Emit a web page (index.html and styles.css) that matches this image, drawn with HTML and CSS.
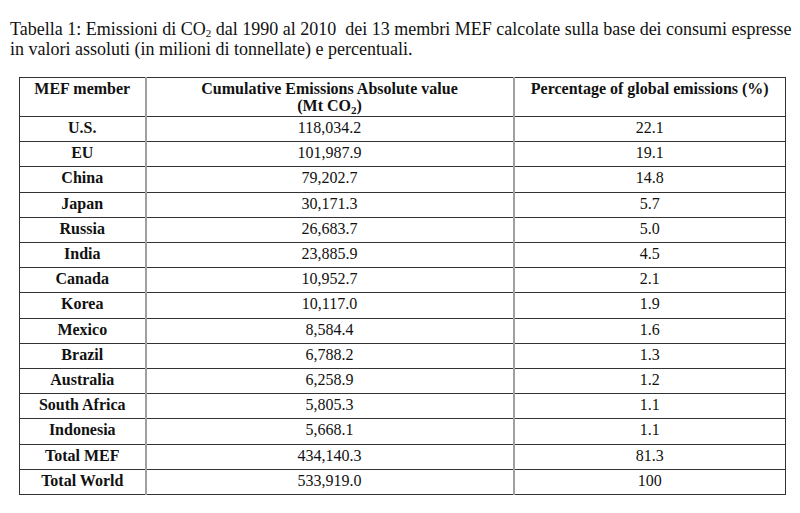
FILE: index.html
```html
<!DOCTYPE html>
<html lang="it">
<head>
<meta charset="utf-8">
<title>Tabella 1</title>
<link rel="stylesheet" href="styles.css">
</head>
<body>
<div class="page">
  <p class="caption">Tabella 1: Emissioni di CO<sub>2</sub> dal 1990 al 2010&nbsp; dei 13 membri MEF calcolate sulla base dei consumi espresse<br>in valori assoluti (in milioni di tonnellate) e percentuali.</p>
  <table class="data">
    <colgroup>
      <col class="c1">
      <col class="c2">
      <col class="c3">
    </colgroup>
    <thead>
      <tr>
        <th>MEF member</th>
        <th>Cumulative Emissions Absolute value<br>(Mt CO<sub>2</sub>)</th>
        <th>Percentage of global emissions (%)</th>
      </tr>
    </thead>
    <tbody>
      <tr><th>U.S.</th><td>118,034.2</td><td>22.1</td></tr>
      <tr><th>EU</th><td>101,987.9</td><td>19.1</td></tr>
      <tr><th>China</th><td>79,202.7</td><td>14.8</td></tr>
      <tr><th>Japan</th><td>30,171.3</td><td>5.7</td></tr>
      <tr><th>Russia</th><td>26,683.7</td><td>5.0</td></tr>
      <tr><th>India</th><td>23,885.9</td><td>4.5</td></tr>
      <tr><th>Canada</th><td>10,952.7</td><td>2.1</td></tr>
      <tr><th>Korea</th><td>10,117.0</td><td>1.9</td></tr>
      <tr><th>Mexico</th><td>8,584.4</td><td>1.6</td></tr>
      <tr><th>Brazil</th><td>6,788.2</td><td>1.3</td></tr>
      <tr><th>Australia</th><td>6,258.9</td><td>1.2</td></tr>
      <tr><th>South Africa</th><td>5,805.3</td><td>1.1</td></tr>
      <tr><th>Indonesia</th><td>5,668.1</td><td>1.1</td></tr>
      <tr><th>Total MEF</th><td>434,140.3</td><td>81.3</td></tr>
      <tr><th>Total World</th><td>533,919.0</td><td>100</td></tr>
    </tbody>
  </table>
</div>
</body>
</html>
```
FILE: styles.css
```css
html, body {
  margin: 0;
  padding: 0;
  background: #ffffff;
}

body {
  font-family: "Liberation Serif", "Times New Roman", serif;
  color: #111111;
}

.page {
  padding: 19px 0 0 10px;
}

.caption {
  margin: 0;
  font-size: 18px;
  line-height: 20px;
  white-space: nowrap;
}

.caption sub {
  font-size: 11px;
  line-height: 0;
  vertical-align: -2px;
}

.data {
  margin: 18px 0 0 9px;
  width: 766px;
  border-collapse: collapse;
  font-family: "Liberation Serif", "Times New Roman", serif;
  font-size: 16px;
  table-layout: fixed;
}

.c1 { width: 126px; }
.c2 { width: 368px; }
.c3 { width: 272px; }

.data th,
.data td {
  border-top: 1px solid #333;
  border-bottom: 1px solid #333;
  border-left: 2px solid #a0a0a0;
  border-right: 2px solid #a0a0a0;
  text-align: center;
  vertical-align: top;
  padding: 2px 2px 4px;
  line-height: 18.2px;
  overflow: hidden;
  white-space: nowrap;
}

.data thead th {
  padding: 2px 2px 2px;
  line-height: 17px;
}

.data tr > :first-child {
  border-left: 1px solid #333;
}

.data tr > :last-child {
  border-right: 1px solid #333;
}

.data th {
  font-weight: bold;
}

.data td {
  font-weight: normal;
}

.data sub {
  font-size: 11px;
  line-height: 0;
  vertical-align: -3px;
}
```
